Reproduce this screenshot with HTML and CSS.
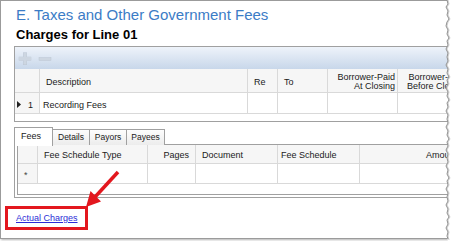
FILE: index.html
```html
<!DOCTYPE html>
<html lang="en">
<head>
    <meta charset="UTF-8">
    <title>Taxes and Other Government Fees</title>
    <link rel="stylesheet" href="styles.css">
</head>
<body>
    <div class="page">
        <div class="frame">
            <h1 class="title">E. Taxes and Other Government Fees</h1>
            <h2 class="subtitle">Charges for Line 01</h2>

            <div class="grid">
                <div class="toolbar">
                    <svg class="tool-icons" width="40" height="22" viewBox="0 0 40 22">
                        <rect x="4" y="10" width="12" height="3.5" fill="#cdd6e1" stroke="#bcc6d3" stroke-width="0.5"/>
                        <rect x="8.25" y="5.75" width="3.5" height="12" fill="#cdd6e1" stroke="#bcc6d3" stroke-width="0.5"/>
                        <rect x="4" y="10" width="12" height="3.5" fill="#cdd6e1"/>
                        <rect x="24" y="10.5" width="12" height="3" fill="#cdd6e1" stroke="#bcc6d3" stroke-width="0.5"/>
                    </svg>
                </div>
                <table class="lines">
                    <thead>
                        <tr>
                            <th class="rowhead w-rh"></th>
                            <th class="w-desc">Description</th>
                            <th class="w-re">Re</th>
                            <th class="w-to">To</th>
                            <th class="w-bp num">Borrower-Paid<br>At Closing</th>
                            <th class="w-bb num">Borrower-Paid<br>Before Closing</th>
                        </tr>
                    </thead>
                    <tbody>
                        <tr>
                            <td class="rowhead"><svg class="current" width="4" height="7" viewBox="0 0 4 7"><path d="M0 0 L4 3.5 L0 7 Z" fill="#222"/></svg><span class="row-num">1</span></td>
                            <td>Recording Fees</td>
                            <td></td>
                            <td></td>
                            <td></td>
                            <td></td>
                        </tr>
                    </tbody>
                </table>
                <div class="grid-fill"></div>
            </div>

            <div class="tabs">
                <div class="tab active">Fees</div>
                <div class="tab t-details">Details</div>
                <div class="tab t-payors">Payors</div>
                <div class="tab t-payees">Payees</div>
            </div>
            <div class="panel">
                <div class="fees-grid">
                    <table class="fees">
                        <thead>
                            <tr>
                                <th class="rowhead f-rh"></th>
                                <th class="f-type">Fee Schedule Type</th>
                                <th class="f-pages num">Pages</th>
                                <th class="f-doc">Document</th>
                                <th class="f-fs">Fee Schedule</th>
                                <th class="f-amt num">Amount</th>
                            </tr>
                        </thead>
                        <tbody>
                            <tr>
                                <td class="rowhead new-row">*</td>
                                <td></td>
                                <td></td>
                                <td></td>
                                <td></td>
                                <td></td>
                            </tr>
                        </tbody>
                    </table>
                    <div class="fees-fill"></div>
                </div>
            </div>

            <div class="link-row">
                <a class="actual-link" href="#">Actual Charges</a>
            </div>
        </div>

        <!-- fleche rouge vers le lien -->
        <svg class="arrow" width="140" height="241" viewBox="0 0 140 241">
            <line x1="118" y1="172" x2="95" y2="197" stroke="#e3171e" stroke-width="3.5"/>
            <polygon points="86,207 101,201.5 90.5,191" fill="#e3171e"/>
        </svg>

        <!-- bord dechire a droite -->
        <svg class="torn" width="10" height="242" viewBox="0 0 10 242">
            <polygon fill="#fff" points="4,0 5,4 3,7 5,11 4,15 6,19 4,22 3,26 5,30 4,34 6,38 4,41 5,45 3,49 5,53 4,57 5,61 3,65 5,69 4,73 6,77 4,80 5,84 3,88 5,92 4,96 6,100 4,103 5,107 3,111 5,115 4,119 5,123 3,127 5,131 4,135 6,139 4,142 5,146 3,150 5,154 4,158 5,162 3,166 5,170 4,174 6,178 4,181 5,185 3,189 5,193 4,197 5,201 3,205 5,209 4,213 6,217 4,220 5,224 3,228 5,232 4,236 5,242 10,242 10,0"/>
            <polyline fill="none" stroke="#d0d0d0" stroke-width="1" transform="translate(1,0)" points="4,0 5,4 3,7 5,11 4,15 6,19 4,22 3,26 5,30 4,34 6,38 4,41 5,45 3,49 5,53 4,57 5,61 3,65 5,69 4,73 6,77 4,80 5,84 3,88 5,92 4,96 6,100 4,103 5,107 3,111 5,115 4,119 5,123 3,127 5,131 4,135 6,139 4,142 5,146 3,150 5,154 4,158 5,162 3,166 5,170 4,174 6,178 4,181 5,185 3,189 5,193 4,197 5,201 3,205 5,209 4,213 6,217 4,220 5,224 3,228 5,232 4,236 5,240"/>
            <polyline fill="none" stroke="#8f8f8f" stroke-width="1" points="4,0 5,4 3,7 5,11 4,15 6,19 4,22 3,26 5,30 4,34 6,38 4,41 5,45 3,49 5,53 4,57 5,61 3,65 5,69 4,73 6,77 4,80 5,84 3,88 5,92 4,96 6,100 4,103 5,107 3,111 5,115 4,119 5,123 3,127 5,131 4,135 6,139 4,142 5,146 3,150 5,154 4,158 5,162 3,166 5,170 4,174 6,178 4,181 5,185 3,189 5,193 4,197 5,201 3,205 5,209 4,213 6,217 4,220 5,224 3,228 5,232 4,236 5,239"/>
        </svg>
    </div>
</body>
</html>
```

FILE: styles.css
```css
:root {
    --frame-border: #9b9b9b;
    --grid-border: #a0a0a0;
    --cell-line: #d9d9d9;
    --header-bg: #f6f6f6;
    --title-blue: #3b7cc6;
    --red: #e3171e;
}

body {
    margin: 0;
    padding: 0;
    background: #fff;
    font-family: "Liberation Sans", Arial, sans-serif;
    color: #1a1a1a;
}

.page {
    position: relative;
    width: 453px;
    height: 241px;
    overflow: hidden;
}

.frame {
    width: 452px;
    height: 237px;
    border: 1px solid var(--frame-border);
    border-right: none;
    background: #fff;
    overflow: hidden;
    box-shadow: 1px 1px 2px rgba(0, 0, 0, 0.3);
}

.title {
    margin: 0;
    padding: 5px 0 0 15px;
    font-size: 15px;
    line-height: 17px;
    font-weight: normal;
    color: var(--title-blue);
    white-space: nowrap;
}

.subtitle {
    margin: 4px 0 0 0;
    padding-left: 15px;
    font-size: 13px;
    line-height: 15px;
    font-weight: bold;
    color: #000;
}

/* grille des lignes */
.grid {
    margin: 4px 0 0 13px;
    width: 470px;
    border: 1px solid var(--grid-border);
    border-right: none;
}

.toolbar {
    height: 22px;
    background: linear-gradient(#eef3fa, #c8d7ea);
    display: flex;
    align-items: center;
}

.tool-icons {
    display: block;
}

table {
    border-collapse: separate;
    border-spacing: 0;
    table-layout: fixed;
    font-size: 9px;
}

th,
td {
    box-sizing: border-box;
    border-right: 1px solid var(--cell-line);
    border-bottom: 1px solid var(--cell-line);
    padding: 0 0 0 6px;
    text-align: left;
    font-weight: normal;
    white-space: nowrap;
    overflow: hidden;
    vertical-align: middle;
}

th {
    background: var(--header-bg);
    line-height: 9px;
}

th.num {
    text-align: right;
    padding: 0 2px 0 0;
}

.lines {
    width: 454px;
}

.lines thead tr {
    height: 24px;
}

.lines thead th {
    padding-top: 4px;
}

.lines thead th.num {
    padding-top: 2px;
}

.lines tbody tr {
    height: 21px;
}

.lines td {
    padding: 3px 0 0 3px;
}

.w-rh { width: 25px; }
.w-desc { width: 208px; }
.w-re { width: 30px; }
.w-to { width: 50px; }
.w-bp { width: 70px; }
.w-bb { width: 71px; }

.rowhead {
    background: var(--header-bg);
}

.lines td.rowhead {
    padding-left: 2px;
}

.current {
    vertical-align: middle;
    margin-top: -1px;
}

.row-num {
    margin-left: 7px;
}

.grid-fill {
    height: 7px;
}

/* onglets */
.tabs {
    display: flex;
    align-items: flex-end;
    margin: 5px 0 -1px 13px;
    height: 18px;
    position: relative;
    z-index: 1;
}

.tab {
    box-sizing: border-box;
    height: 16px;
    border: 1px solid var(--grid-border);
    border-bottom: none;
    margin-left: -1px;
    background: linear-gradient(#fdfdfd, #ececec);
    font-size: 8.5px;
    line-height: 15px;
    text-align: center;
}

.tab.active {
    height: 19px;
    margin-left: 0;
    margin-bottom: -1px;
    background: #fff;
    line-height: 16px;
    width: 39px;
    padding-right: 5px;
    font-size: 9px;
}

.t-details { width: 38px; }
.t-payors { width: 38px; }
.t-payees { width: 39px; }

.panel {
    margin-left: 13px;
    width: 470px;
    border: 1px solid var(--grid-border);
    border-right: none;
    padding: 0 0 2px 2px;
}

.fees-grid {
    border-left: 1px solid var(--grid-border);
    border-bottom: 1px solid var(--grid-border);
}

.fees {
    width: 446px;
}

.fees thead tr {
    height: 19px;
}

.fees thead th {
    padding-top: 3px;
}

.fees tbody tr {
    height: 20px;
}

.fees th.num {
    padding-right: 6px;
}

.f-rh { width: 20px; }
.f-type { width: 110px; }
.f-pages { width: 48px; }
.f-doc { width: 82px; }
.f-fs { width: 82px; padding-left: 3px !important; }
.f-amt { width: 104px; }

.fees td.new-row {
    padding: 3px 0 0 6px;
    font-size: 9px;
    color: #444;
}

.fees-fill {
    height: 10px;
}

/* lien encadre */
.link-row {
    box-sizing: border-box;
    margin: 8px 0 0 4px;
    width: 83px;
    height: 24px;
    border: 3px solid var(--red);
    padding-left: 8px;
    display: flex;
    align-items: center;
}

.actual-link {
    font-size: 9px;
    color: #2b2bd6;
    text-decoration: underline;
}

.arrow {
    position: absolute;
    left: 0;
    top: 0;
}

.torn {
    position: absolute;
    left: 443px;
    top: 0;
}
```
